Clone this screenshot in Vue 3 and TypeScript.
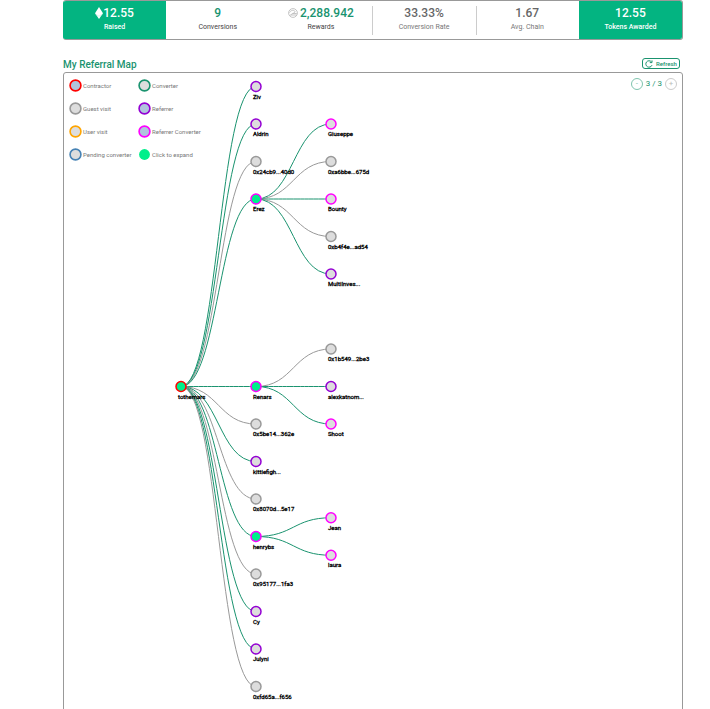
<script setup lang="ts">
type Kind = 'contractor' | 'guest' | 'user' | 'pending' | 'converter' | 'referrer' | 'both' | 'expand'

interface MapNode {
  name: string
  level: number
  row: number
  kind: Kind
  parent?: string
  open?: boolean
}

const stats = [
  { value: '12.55', label: 'Raised', tone: 'solid', icon: 'ether' },
  { value: '9', label: 'Conversions', tone: 'green', icon: '' },
  { value: '2,288.942', label: 'Rewards', tone: 'green', icon: 'token' },
  { value: '33.33%', label: 'Conversion Rate', tone: 'muted', icon: '' },
  { value: '1.67', label: 'Avg. Chain', tone: 'muted', icon: '' },
  { value: '12.55', label: 'Tokens Awarded', tone: 'solid', icon: '' },
]

const legend: { label: string; kind: Kind }[] = [
  { label: 'Contractor', kind: 'contractor' },
  { label: 'Converter', kind: 'converter' },
  { label: 'Guest visit', kind: 'guest' },
  { label: 'Referrer', kind: 'referrer' },
  { label: 'User visit', kind: 'user' },
  { label: 'Referrer Converter', kind: 'both' },
  { label: 'Pending converter', kind: 'pending' },
  { label: 'Click to expand', kind: 'expand' },
]

const nodes: MapNode[] = [
  { name: 'tothemars', level: 0, row: 8, kind: 'contractor', open: true },
  { name: 'Ziv', level: 1, row: 0, kind: 'referrer', parent: 'tothemars' },
  { name: 'Aldrin', level: 1, row: 1, kind: 'referrer', parent: 'tothemars' },
  { name: '0x24cb9...40d0', level: 1, row: 2, kind: 'guest', parent: 'tothemars' },
  { name: 'Erez', level: 1, row: 3, kind: 'both', parent: 'tothemars', open: true },
  { name: 'Renars', level: 1, row: 8, kind: 'both', parent: 'tothemars', open: true },
  { name: '0x5be14...362e', level: 1, row: 9, kind: 'guest', parent: 'tothemars' },
  { name: 'kittiefigh...', level: 1, row: 10, kind: 'referrer', parent: 'tothemars' },
  { name: '0x8070d...5e17', level: 1, row: 11, kind: 'guest', parent: 'tothemars' },
  { name: 'henrybs', level: 1, row: 12, kind: 'both', parent: 'tothemars', open: true },
  { name: '0x95177...1fa3', level: 1, row: 13, kind: 'guest', parent: 'tothemars' },
  { name: 'Cy', level: 1, row: 14, kind: 'referrer', parent: 'tothemars' },
  { name: 'Julyni', level: 1, row: 15, kind: 'referrer', parent: 'tothemars' },
  { name: '0xfd65a...f656', level: 1, row: 16, kind: 'guest', parent: 'tothemars' },
  { name: 'Giuseppe', level: 2, row: 1, kind: 'both', parent: 'Erez' },
  { name: '0xa6bbe...675d', level: 2, row: 2, kind: 'guest', parent: 'Erez' },
  { name: 'Bounty', level: 2, row: 3, kind: 'both', parent: 'Erez' },
  { name: '0xb4f4e...ad54', level: 2, row: 4, kind: 'guest', parent: 'Erez' },
  { name: 'MultiInves...', level: 2, row: 5, kind: 'referrer', parent: 'Erez' },
  { name: '0x1b549...2be3', level: 2, row: 7, kind: 'guest', parent: 'Renars' },
  { name: 'alexkatnom...', level: 2, row: 8, kind: 'referrer', parent: 'Renars' },
  { name: 'Shoot', level: 2, row: 9, kind: 'both', parent: 'Renars' },
  { name: 'Jean', level: 2, row: 11.5, kind: 'both', parent: 'henrybs' },
  { name: 'laura', level: 2, row: 12.5, kind: 'both', parent: 'henrybs' },
]

const px = (n: MapNode) => 117 + n.level * 75
const py = (n: MapNode) => 13.5 + n.row * 37.5

const links = nodes
  .filter((n) => n.parent)
  .map((n) => {
    const p = nodes.find((m) => m.name === n.parent)!
    const mid = (px(p) + px(n)) / 2
    return {
      id: n.name,
      guest: n.kind === 'guest',
      d: `M${px(p)},${py(p)} C${mid},${py(p)} ${mid},${py(n)} ${px(n)},${py(n)}`,
    }
  })
</script>

<template>
  <main class="page">
    <section class="stats">
      <div v-for="s in stats" :key="s.label" class="stat" :class="s.tone">
        <div class="value">
          <svg v-if="s.icon === 'ether'" class="ether" viewBox="0 0 8 12" aria-hidden="true">
            <path d="M4 0 L8 6.2 L4 12 L0 6.2 Z" fill="#fff" />
            <path d="M0.6 7.2 L4 9.2 L7.4 7.2" fill="none" stroke="#b5e8d8" stroke-width=".5" />
          </svg>
          <svg v-if="s.icon === 'token'" class="token" viewBox="0 0 10 10" aria-hidden="true">
            <circle cx="5" cy="5" r="4.4" />
            <path d="M1.6 4.6 C2.6 2 6.4 1.6 7 3.6 C7.2 5 4 5.4 2.4 7.2 M2.4 7 H8.6 M4.6 5.4 L8.8 5.6" />
          </svg>
          <span>{{ s.value }}</span>
        </div>
        <div class="label">{{ s.label }}</div>
      </div>
    </section>

    <header class="heading">
      <h1>My Referral Map</h1>
      <button class="refresh" type="button">
        <svg viewBox="0 0 8 8" aria-hidden="true">
          <path d="M6.4 1.8 A3.2 3.2 0 1 0 7 5.2" />
          <path d="M7 0.4 V2.6 H4.8" />
        </svg>
        <span>Refresh</span>
      </button>
    </header>

    <section class="map">
      <svg class="tree" width="100%" height="660" role="img" aria-label="Referral tree">
        <path v-for="l in links" :key="l.id" class="link" :class="{ guest: l.guest }" :d="l.d" />
        <g v-for="n in nodes" :key="n.name" :class="[n.kind, { open: n.open }]">
          <circle class="dot" :cx="px(n)" :cy="py(n)" r="5" />
          <text :x="px(n) - 3" :y="py(n) + 12">{{ n.name }}</text>
        </g>
      </svg>

      <div class="overlay">
        <ul class="legend">
          <li v-for="item in legend" :key="item.label">
            <svg viewBox="0 0 12 12" :class="item.kind" aria-hidden="true">
              <circle class="dot key" cx="6" cy="6" r="5" />
            </svg>
            <span>{{ item.label }}</span>
          </li>
        </ul>
        <div class="depth">
          <button type="button" aria-label="Show fewer levels">-</button>
          <span>3 / 3</span>
          <button type="button" class="off" aria-label="Show more levels">+</button>
        </div>
      </div>
    </section>
  </main>
</template>

<style>
body {
  background: #fff;
  overflow: hidden;
}
</style>

<style scoped>
.page {
  box-sizing: border-box;
  padding: 0 27px 0 63px;
  font-family: Roboto, 'Liberation Sans', sans-serif;
  color: #1a936f;
}

.stats {
  display: grid;
  grid-template-columns: repeat(6, 1fr);
  border: 1px solid #999;
  border-left: 0;
  border-radius: 3px;
  overflow: hidden;
}

.stat {
  position: relative;
  height: 38px;
  text-align: center;
}

.stat.solid {
  background: #03b481;
  color: #fff;
}

.stat.muted {
  color: #666;
}

.stat.muted::before {
  content: '';
  position: absolute;
  left: 0;
  top: 5px;
  bottom: 4px;
  border-left: 1px solid #ccc;
}

.value {
  display: flex;
  align-items: center;
  justify-content: center;
  height: 16px;
  padding-top: 4px;
  font-size: 12px;
  font-weight: 500;
}

.label {
  font-size: 7px;
  line-height: 12px;
  color: #444;
}

.muted .label {
  color: #777;
}

.solid .label {
  color: #fff;
  font-weight: 500;
}

.ether {
  width: 8px;
  height: 12px;
}

.token {
  width: 10px;
  height: 10px;
  margin-right: 2px;
  fill: none;
  stroke: #b5b5b5;
  stroke-width: 0.8;
}

.heading {
  display: flex;
  align-items: flex-start;
  justify-content: space-between;
  padding: 18px 3px 1px 0;
}

h1 {
  margin: 0;
  font-size: 10px;
  line-height: 13px;
  font-weight: 500;
}

.refresh {
  display: flex;
  align-items: center;
  justify-content: center;
  gap: 3px;
  width: 38px;
  height: 11px;
  padding: 0;
  border: 1px solid #1a936f;
  border-radius: 3px;
  background: #fff;
  color: #1a936f;
  font: 500 6px/7px Roboto, sans-serif;
}

.refresh svg {
  width: 8px;
  height: 8px;
  fill: none;
  stroke: #1a936f;
}

.map {
  display: grid;
  border: 1px solid #999;
  border-radius: 3px;
}

.tree,
.overlay {
  grid-area: 1 / 1;
}

.tree {
  display: block;
}

.overlay {
  display: flex;
  justify-content: space-between;
  align-items: flex-start;
  padding: 5px 5px 0;
}

.legend {
  display: grid;
  grid-template-columns: 69px auto;
  grid-auto-rows: 23px;
  margin: 0;
  padding: 0;
  list-style: none;
  font-size: 6px;
  color: #777;
}

.legend li {
  display: flex;
  align-items: center;
  height: 14px;
  gap: 1px;
  white-space: nowrap;
}

.legend svg {
  width: 13px;
  height: 13px;
}

.depth {
  display: flex;
  align-items: center;
  gap: 3px;
  font-size: 8px;
  line-height: 12px;
}

.depth button {
  width: 12px;
  height: 12px;
  padding: 0;
  border: 1px solid #7fc4ae;
  border-radius: 50%;
  background: #fff;
  color: #7fc4ae;
  font: 8px/8px Roboto, sans-serif;
}

.depth .off {
  border-color: #ccc;
  color: #bbb;
}

.link {
  fill: none;
  stroke: #1a936f;
  stroke-width: 1px;
}

.link.guest {
  stroke: #999;
}

.dot {
  fill: #ddd;
  stroke-width: 1.5px;
}

.contractor .dot {
  stroke: #f00;
}

.guest .dot {
  stroke: #999;
}

.user .dot {
  stroke: orange;
}

.pending .dot {
  stroke: steelblue;
}

.converter .dot {
  stroke: #1a936f;
}

.referrer .dot {
  stroke: darkviolet;
}

.both .dot {
  stroke: #f0f;
}

.expand .dot,
.open .dot {
  fill: #00ef8b;
}

.contractor .key,
.referrer .key,
.both .key {
  fill: lightsteelblue;
}

text {
  font-size: 6px;
  fill: #000;
  stroke: #000;
  stroke-width: 0.3px;
}
</style>
